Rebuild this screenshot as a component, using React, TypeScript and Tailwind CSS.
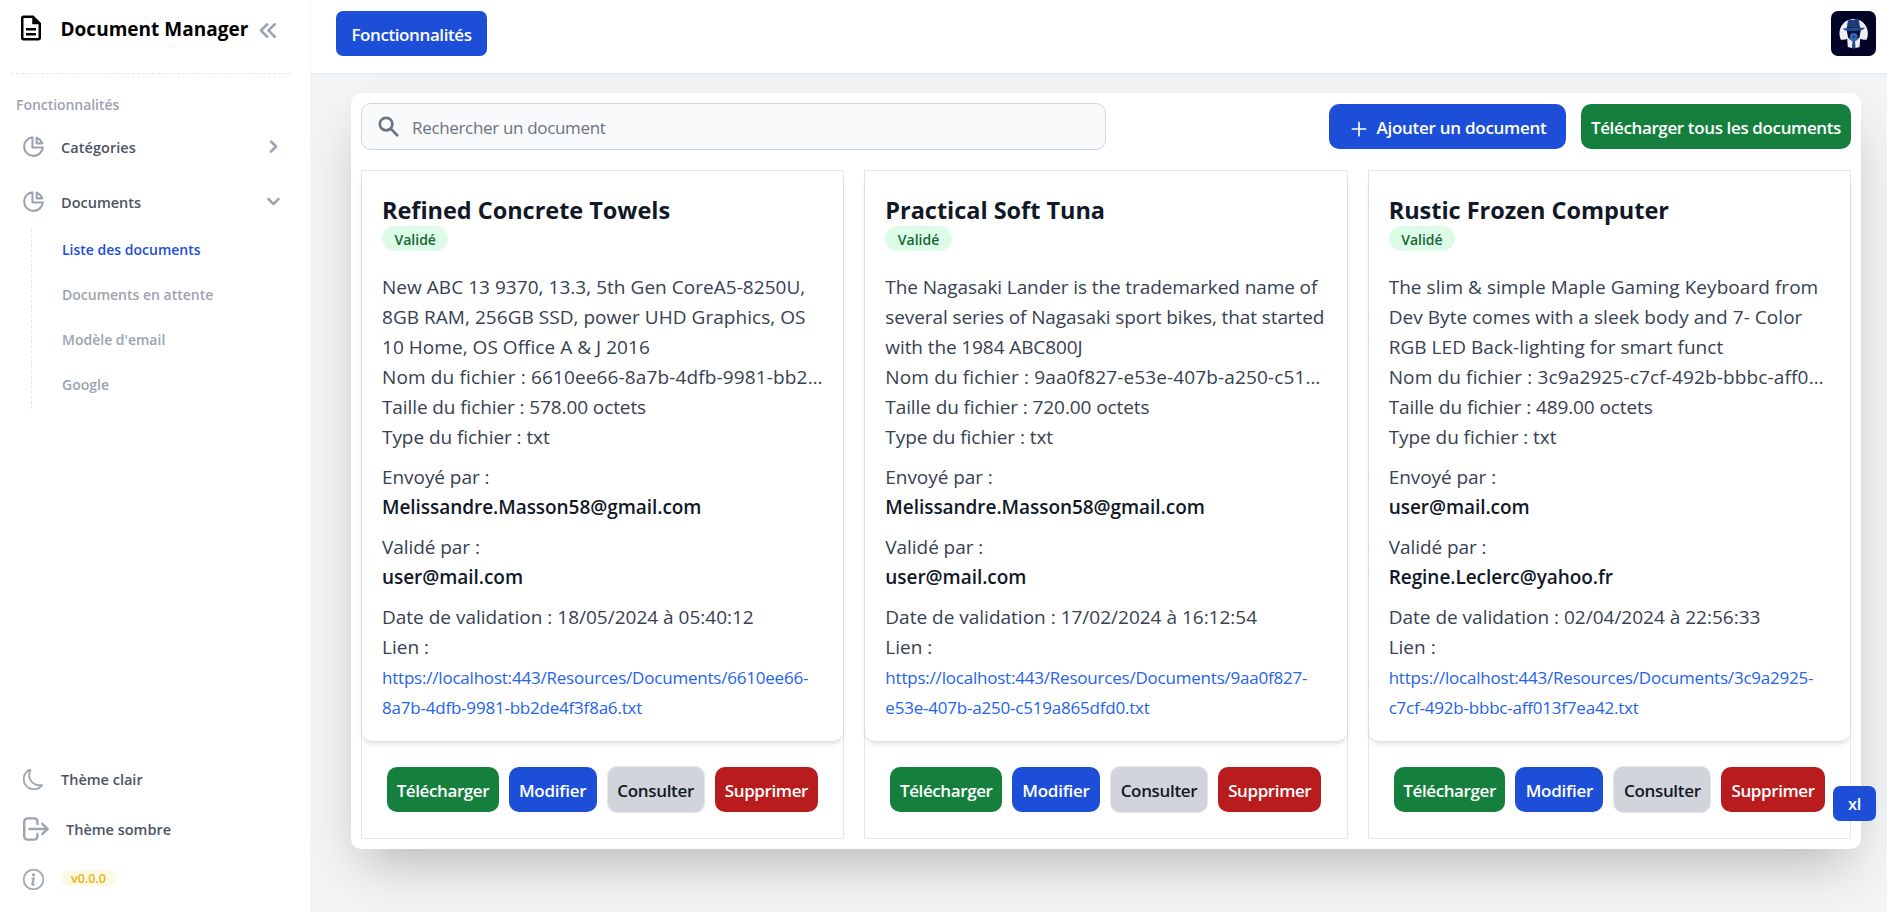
import React from "react";
import { MdOutlineDescription } from "react-icons/md";
import {
  HiChevronDoubleLeft,
  HiChevronDown,
  HiChevronRight,
  HiOutlineChartPie,
  HiOutlinePlus,
} from "react-icons/hi";
import { BsInfoCircle, BsMoon } from "react-icons/bs";

type Doc = {
  title: string;
  description: string;
  tracking: string;
  file: string;
  size: string;
  sender: string;
  validator: string;
  date: string;
};

const docs: Doc[] = [
  {
    title: "Refined Concrete Towels",
    description:
      "New ABC 13 9370, 13.3, 5th Gen CoreA5-8250U, 8GB RAM, 256GB SSD, power UHD Graphics, OS 10 Home, OS Office A & J 2016",
    tracking: "tracking-[0.04px]",
    file: "6610ee66-8a7b-4dfb-9981-bb2de4f3f8a6.txt",
    size: "578.00",
    sender: "Melissandre.Masson58@gmail.com",
    validator: "user@mail.com",
    date: "18/05/2024 à 05:40:12",
  },
  {
    title: "Practical Soft Tuna",
    description:
      "The Nagasaki Lander is the trademarked name of several series of Nagasaki sport bikes, that started with the 1984 ABC800J",
    tracking: "tracking-[-0.1px]",
    file: "9aa0f827-e53e-407b-a250-c519a865dfd0.txt",
    size: "720.00",
    sender: "Melissandre.Masson58@gmail.com",
    validator: "user@mail.com",
    date: "17/02/2024 à 16:12:54",
  },
  {
    title: "Rustic Frozen Computer",
    description:
      "The slim & simple Maple Gaming Keyboard from Dev Byte comes with a sleek body and 7- Color RGB LED Back-lighting for smart funct",
    tracking: "tracking-[0.05px]",
    file: "3c9a2925-c7cf-492b-bbbc-aff013f7ea42.txt",
    size: "489.00",
    sender: "user@mail.com",
    validator: "Regine.Leclerc@yahoo.fr",
    date: "02/04/2024 à 22:56:33",
  },
];

const subItems = [
  { label: "Liste des documents", active: true },
  { label: "Documents en attente", active: false },
  { label: "Modèle d'email", active: false },
  { label: "Google", active: false },
];

function SearchIcon() {
  return (
    <svg
      className="size-[21px] shrink-0"
      viewBox="0 0 21 21"
      fill="none"
      stroke="currentColor"
      strokeWidth="2.7"
      strokeLinecap="round"
    >
      <circle cx="8.100" cy="8.100" r="6.300" />
      <path d="M12.900 12.900 19.200 19.200" />
    </svg>
  );
}

function LogoutIcon() {
  return (
    <svg
      className="w-[26px] h-[24px] shrink-0"
      viewBox="0 0 26 24"
      fill="none"
      stroke="currentColor"
      strokeWidth="2.4"
      strokeLinecap="round"
      strokeLinejoin="round"
    >
      <path d="M14.500 7V4.800A3.400 3.400 0 0 0 11.100 1.400H4.600A3.400 3.400 0 0 0 1.200 4.800v14.400a3.400 3.400 0 0 0 3.400 3.400h6.500a3.400 3.400 0 0 0 3.400-3.400V17" />
      <path d="M6.500 12H24.500M19.300 6.800 24.700 12l-5.400 5.200" />
    </svg>
  );
}

function Avatar() {
  return (
    <svg className="w-[45px] h-[45px] rounded-[7px]" viewBox="0 0 45 45">
      <rect width="45" height="45" fill="#030328" />
      <path
        d="M22.700 8C14 8 8.500 15 8.500 22.300c0 2.400.500 4.500 1.400 6.400 2.300.2 4.600-.2 6.300-1l.6 8.400c3.600 1.400 8.300 1.400 11.800 0l.6-8.400c1.700.8 4 1.200 6.300 1 .9-1.900 1.400-4 1.400-6.400C36.900 15 31.400 8 22.700 8z"
        fill="#eceef1"
      />
      <path d="M15.500 18.500h14.400l-1.500 8-3.200 3h-5l-3.200-3z" fill="#07103a" />
      <path
        d="M16.200 15.600c.1-2.700.4-5.300 1.300-6.400 1.600-1.400 3.400.1 5.200-.3 1.700-.4 3-1.900 4.300-1.200 1.300 1.300 1.500 5 1.800 7.900z"
        fill="#1e3a78"
      />
      <path d="M15.900 15.200h13.200v2.600H15.900z" fill="#0c1c4a" />
      <path
        d="M11.600 17.400c3.300.3 6-.8 11-.8s8 .4 11.600 0c-2 3-6.700 3.500-11.500 3.500s-9.200-.1-11.100-2.700z"
        fill="#24478e"
      />
      <circle cx="22.700" cy="26" r="3.900" fill="#3563b3" />
      <circle cx="22.700" cy="25.800" r="0.900" fill="#0c1c4a" />
      <path d="M21.500 30h2.500l.5 7h-3.500z" fill="#1e4a86" />
    </svg>
  );
}

function Sidebar() {
  return (
    <aside className="flex w-[311px] shrink-0 flex-col border-r border-[#f6f7f9] bg-white font-semibold text-[#4b5563]">
      <div className="mr-[19px] ml-[11px] flex h-[74px] items-start border-b border-dashed border-[#e5e7eb]">
        <MdOutlineDescription className="mt-[13px] ml-[5px] size-[30px] shrink-0 text-black" />
        <span className="mt-[14px] ml-[14.5px] w-[188px] text-[19px] leading-[30px] font-bold tracking-[0.02px] whitespace-nowrap text-black">
          Document Manager
        </span>
        <HiChevronDoubleLeft className="mt-[18px] ml-[7px] size-[25px] shrink-0 text-[#9ca3af]" />
      </div>

      <div className="mt-[21px] pl-4 text-[14px] leading-5 tracking-[-0.05px] text-[#9ca3af]">
        Fonctionnalités
      </div>

      <nav className="mt-1">
        <div className="flex h-[55px] items-center pr-6 pl-[21px] text-[14.5px]">
          <HiOutlineChartPie className="size-[25px] text-[#9ca3af]" />
          <span className="mt-[3px] ml-[15px] flex-1 tracking-[0.05px]">Catégories</span>
          <HiChevronRight className="size-[25px] text-[#9ca3af]" />
        </div>
        <div className="flex h-[55px] items-center pr-6 pl-[21px] text-[14.5px]">
          <HiOutlineChartPie className="size-[25px] text-[#9ca3af]" />
          <span className="mt-[3px] ml-[15px] flex-1">Documents</span>
          <HiChevronDown className="size-[25px] text-[#9ca3af]" />
        </div>
        <ul className="ml-[31px] border-l border-dashed border-[#e5e7eb] text-[14px]">
          {subItems.map((item) => (
            <li
              key={item.label}
              className={
                item.active
                  ? "flex h-[45px] items-center pb-[5px] pl-[30px] text-[#1d4ed8]"
                  : "flex h-[45px] items-center pb-[5px] pl-[30px] text-[#9ca3af]"
              }
            >
              {item.label}
            </li>
          ))}
        </ul>
      </nav>

      <div className="mt-auto pb-2 pl-[23px] text-[14.5px]">
        <div className="flex h-[50px] items-center gap-[17px]">
          <BsMoon className="size-[21px] text-[#9ca3af]" stroke="currentColor" strokeWidth={0.4} />
          <span className="mt-[2px]">Thème clair</span>
        </div>
        <div className="flex h-[50px] items-center gap-[17px]">
          <span className="text-[#9ca3af]">
            <LogoutIcon />
          </span>
          <span className="mt-[2px]">Thème sombre</span>
        </div>
        <div className="flex h-[50px] items-center gap-[17px]">
          <BsInfoCircle className="size-[21px] text-[#9ca3af]" stroke="currentColor" strokeWidth={0.4} />
          <span className="mb-[2px] flex h-4 items-center rounded-full bg-[#fef9e7] px-2.5 pt-px text-[12.5px] leading-4 text-[#eab308]">
            v0.0.0
          </span>
        </div>
      </div>
    </aside>
  );
}

function DocumentCard({ doc }: { doc: Doc }) {
  return (
    <article className="flex min-w-0 flex-col border border-[#e5e7eb]">
      <div className="rounded-[10px] bg-white p-5 pb-[18px] shadow-[0_4px_6px_-1px_rgba(0,0,0,0.1),0_2px_4px_-2px_rgba(0,0,0,0.1)]">
        <h2 className="pt-[3px] text-[23.5px] leading-8 font-bold tracking-[-0.03px] text-[#111827]">
          {doc.title}
        </h2>
        <div className="flex">
          <span className="h-[25px] rounded-full bg-[#dcfce7] px-[12.5px] pt-px text-[14px] leading-[26px] font-semibold text-[#166534]">
            Validé
          </span>
        </div>
        <div className="mt-[21px] text-[19px] leading-[30px] text-[#374151]">
          <p className={doc.tracking}>{doc.description}</p>
          <p className="truncate tracking-[0.14px]">Nom du fichier : {doc.file}</p>
          <p className="tracking-[-0.1px]">Taille du fichier : {doc.size} octets</p>
          <p className="tracking-[-0.06px]">Type du fichier : txt</p>
          <div className="mt-2.5">
            <p className="tracking-[-0.06px]">Envoyé par :</p>
            <p className="font-semibold tracking-[-0.05px] text-[#111827]">{doc.sender}</p>
          </div>
          <div className="mt-2.5">
            <p className="tracking-[-0.06px]">Validé par :</p>
            <p className="font-semibold tracking-[-0.05px] text-[#111827]">{doc.validator}</p>
          </div>
          <p className="mt-2.5">Date de validation : {doc.date}</p>
          <p>Lien :</p>
          <a className="mt-px block h-[60px] text-[17px] tracking-[-0.21px] text-[#2563eb]">
            https://localhost:443/Resources/Documents/{doc.file}
          </a>
        </div>
      </div>
      <div className="flex items-center justify-center gap-2.5 py-[25px] text-[17px] font-semibold tracking-[-0.4px] text-white">
        <button className="h-[45px] w-[111.5px] rounded-[10px] bg-[#15803d] pt-[2px]">Télécharger</button>
        <button className="h-[45px] w-[88px] rounded-[10px] bg-[#1d4ed8] pt-[2px] tracking-[-0.25px]">
          Modifier
        </button>
        <button className="h-[47px] w-[98px] rounded-[10px] border border-[#e5e7eb] bg-[#d1d5db] pt-[2px] tracking-[-0.33px] text-[#111827]">
          Consulter
        </button>
        <button className="h-[45px] w-[103.5px] rounded-[10px] bg-[#b91c1c] pt-[2px]">Supprimer</button>
      </div>
    </article>
  );
}

export default function App() {
  return (
    <div className="relative flex h-[912px] w-[1887px] overflow-hidden bg-[#f3f4f6] font-['Open_Sans','Noto_Sans',sans-serif]">
      <Sidebar />
      <div className="flex min-w-0 flex-1 flex-col">
        <header className="flex h-[73px] items-start justify-between bg-white pt-[11px] pr-[11px] pl-[25px] shadow-[0_1px_2px_0_rgba(0,0,0,0.06)]">
          <button className="h-[45px] w-[151px] rounded-[7px] bg-[#1d4ed8] pt-[3px] text-[17px] font-semibold tracking-[-0.4px] text-white">
            Fonctionnalités
          </button>
          <Avatar />
        </header>

        <main className="mt-5 mr-[26px] ml-10 rounded-[10px] bg-white p-2.5 shadow-2xl">
          <div className="flex items-center">
            <div className="flex h-[47px] w-[745px] items-center rounded-[10px] border border-[#d1d5db] bg-[#f9fafb] pl-[16px] text-[#6b7280]">
              <SearchIcon />
              <span className="mt-[2px] ml-[13px] text-[17px] tracking-[-0.33px]">Rechercher un document</span>
            </div>
            <div className="ml-auto flex gap-[15px] text-[17px] font-semibold text-white">
              <button className="flex h-[45px] w-[237px] items-center rounded-[10px] bg-[#1d4ed8] pl-5">
                <HiOutlinePlus className="mt-[5px] size-5" />
                <span className="mt-[2px] ml-[7.5px] tracking-[-0.27px]">Ajouter un document</span>
              </button>
              <button className="h-[45px] w-[270px] rounded-[10px] bg-[#15803d] pt-[2px] tracking-[-0.37px]">
                Télécharger tous les documents
              </button>
            </div>
          </div>
          <div className="mt-5 grid grid-cols-3 gap-5">
            {docs.map((doc) => (
              <DocumentCard key={doc.title} doc={doc} />
            ))}
          </div>
        </main>
      </div>
      <div className="absolute top-[786px] left-[1833px] flex h-[35px] w-[43px] items-center justify-center rounded-[7px] bg-[#1d4ed8] pt-[2px] text-[16.5px] font-semibold tracking-[-0.3px] text-white">
        xl
      </div>
    </div>
  );
}
